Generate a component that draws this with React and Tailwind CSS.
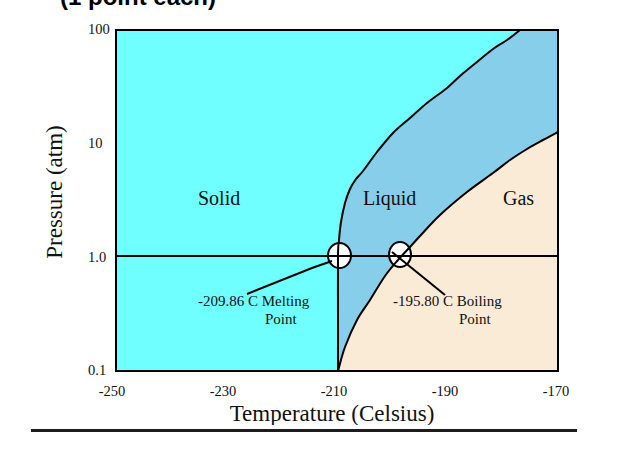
import React from "react";

function crPath(pts, start = "M") {
  const f = (p) => `${p[0].toFixed(2)},${p[1].toFixed(2)}`;
  let d = `${start}${f(pts[0])}`;
  for (let i = 0; i < pts.length - 1; i++) {
    const p0 = pts[i - 1] || pts[i];
    const p1 = pts[i];
    const p2 = pts[i + 1];
    const p3 = pts[i + 2] || p2;
    const c1 = [p1[0] + (p2[0] - p0[0]) / 6, p1[1] + (p2[1] - p0[1]) / 6];
    const c2 = [p2[0] - (p3[0] - p1[0]) / 6, p2[1] - (p3[1] - p1[1]) / 6];
    d += ` C${f(c1)} ${f(c2)} ${f(p2)}`;
  }
  return d;
}

const MELT = [
  [338, 371], [338, 320], [338, 256], [339, 240], [341, 222], [345, 203],
  [350, 189], [356, 179], [363, 171], [377, 152], [393, 133], [410, 118],
  [427, 103], [447, 88], [460, 76], [477, 62], [493, 49], [507, 40], [520, 30],
];

const BOIL = [
  [338, 371], [345, 347], [357, 320], [370, 300], [385, 276], [398, 260],
  [410, 247], [420, 236], [440, 215], [467, 192], [493, 173], [510, 160],
  [527, 149], [543, 140], [558, 132],
];

const meltPath = crPath(MELT);
const boilPath = crPath(BOIL);
const liquidPath =
  crPath(MELT) + " L558,30 L558,132 " + crPath([...BOIL].reverse(), "L") + " Z";
const gasPath = crPath(BOIL) + " L558,371 Z";

const serif = { fontFamily: '"Liberation Serif", "Times New Roman", serif' };

function PhaseChart() {
  const xTicks = [
    ["-250", 112],
    ["-230", 223],
    ["-210", 334],
    ["-190", 445],
    ["-170", 556],
  ];
  const yTicks = [
    ["100", 34],
    ["10", 148],
    ["1.0", 262],
    ["0.1", 375],
  ];
  return (
    <svg
      width="632"
      height="415"
      viewBox="0 10 632 415"
      className="block"
      style={serif}
    >
      <defs>
        <clipPath id="plot">
          <rect x="116" y="30" width="442" height="341" />
        </clipPath>
      </defs>
      <g clipPath="url(#plot)">
        <rect x="116" y="30" width="442" height="341" fill="#70ffff" />
        <path d={liquidPath} fill="#87ceeb" />
        <path d={gasPath} fill="#faebd7" />
        <ellipse cx="339.5" cy="255.5" rx="11.5" ry="12.5" fill="#fff" stroke="#000" strokeWidth="2" />
        <ellipse cx="400" cy="254.5" rx="11" ry="12.5" fill="#fff" stroke="#000" strokeWidth="2" />
        <path d={meltPath} fill="none" stroke="#000" strokeWidth="2" strokeLinejoin="round" />
        <path d={boilPath} fill="none" stroke="#000" strokeWidth="2" strokeLinejoin="round" />
        <line x1="116" y1="256" x2="558" y2="256" stroke="#000" strokeWidth="2" />
        <polyline points="247,294 312,268 332,261" fill="none" stroke="#000" strokeWidth="2" />
        <polyline points="392,252 445,295" fill="none" stroke="#000" strokeWidth="2" />
      </g>
      <rect x="116" y="30" width="442" height="341" fill="none" stroke="#000" strokeWidth="2" />

      {yTicks.map(([t, y]) => (
        <text key={t} x="88" y={y} fontSize="14.5" fill="#111">
          {t}
        </text>
      ))}
      {xTicks.map(([t, x]) => (
        <text key={t} x={x} y="396" fontSize="14.5" fill="#111" textAnchor="middle">
          {t}
        </text>
      ))}

      <text x="198" y="205" fontSize="20" fill="#111">Solid</text>
      <text x="363" y="205" fontSize="20" fill="#111">Liquid</text>
      <text x="503" y="205" fontSize="20" fill="#111">Gas</text>

      <text x="198" y="306" fontSize="15" fill="#111">-209.86 C Melting</text>
      <text x="265" y="324" fontSize="15" fill="#111">Point</text>
      <text x="393" y="306" fontSize="15" fill="#111">-195.80 C Boiling</text>
      <text x="459" y="324" fontSize="15" fill="#111">Point</text>

      <text x="332" y="421" fontSize="23" fill="#111" textAnchor="middle">
        Temperature (Celsius)
      </text>
      <text
        transform="translate(62,192) rotate(-90)"
        fontSize="23"
        fill="#111"
        textAnchor="middle"
      >
        Pressure (atm)
      </text>
    </svg>
  );
}

export default function App() {
  return (
    <div className="w-[632px] h-[451px] overflow-hidden bg-white">
      <div
        className="-mt-[15px] h-[25px] pl-[60px] text-[24px] leading-[24px] font-bold text-black whitespace-nowrap"
        style={{ fontFamily: '"Liberation Sans", Arial, sans-serif' }}
      >
        (1 point each)
      </div>
      <PhaseChart />
      <div className="mt-[4px] ml-[31px] w-[546px] h-[3px] bg-[#1c1c1c]" />
    </div>
  );
}
